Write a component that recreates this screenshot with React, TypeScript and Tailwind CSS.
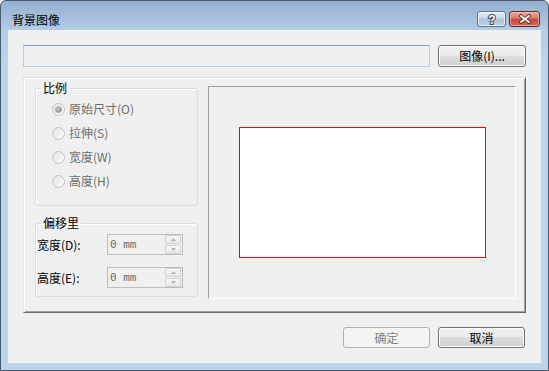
import React from "react";

const FONT = { fontFamily: '"Noto Sans CJK SC", "Noto Sans", sans-serif' };

function Radio({ checked, label }: { checked?: boolean; label: string }) {
  return (
    <div className="flex items-center h-[24px]">
      <svg width="13" height="13" viewBox="0 0 13 13" className="shrink-0">
        <defs>
          <linearGradient id={checked ? "rg1" : "rg0"} x1="0" y1="0" x2="1" y2="1">
            <stop offset="0" stopColor="#e2e2e2" />
            <stop offset="1" stopColor="#fbfbfb" />
          </linearGradient>
          <radialGradient id="dot" cx="0.4" cy="0.35" r="0.7">
            <stop offset="0" stopColor="#c8c8c8" />
            <stop offset="1" stopColor="#8e8e8e" />
          </radialGradient>
        </defs>
        <circle cx="6.5" cy="6.5" r="6" fill={`url(#${checked ? "rg1" : "rg0"})`} stroke="#c4c4c4" />
        {checked && <circle cx="6.5" cy="6.5" r="3.3" fill="url(#dot)" />}
      </svg>
      <span className="ml-[4px] text-[12px] leading-[14px] text-[#6d6d6d]">{label}</span>
    </div>
  );
}

function SpinBtn({ up }: { up?: boolean }) {
  return (
    <div className="w-[16px] h-[9px] border border-[#d2d2d2] rounded-[1px] bg-[linear-gradient(to_bottom,#f7f7f7,#e8e8e8)] flex items-center justify-center">
      <svg width="5" height="3" viewBox="0 0 5 3">
        {up ? <polygon points="2.5,0 5,3 0,3" fill="#b4b4b4" /> : <polygon points="0,0 5,0 2.5,3" fill="#b4b4b4" />}
      </svg>
    </div>
  );
}

function Spin() {
  return (
    <div className="w-[76px] h-[21px] border border-[#bdbdbd] bg-[#f0f0f0] flex items-center">
      <span className="flex-1 pl-[2px] text-[11px] leading-[14px] text-[#6d6d6d]" style={{ fontFamily: '"DejaVu Sans Mono", "Liberation Mono", monospace' }}>
        0 mm
      </span>
      <div className="flex flex-col gap-[1px] mr-[1px]">
        <SpinBtn up />
        <SpinBtn />
      </div>
    </div>
  );
}

function Legend({ children }: { children: React.ReactNode }) {
  return <legend className="ml-[5px] px-[2px] text-[12px] leading-[14px] text-black">{children}</legend>;
}

export default function App() {
  return (
    <div
      className="w-[549px] h-[371px] flex flex-col border border-[#4b5a6b] rounded-t-[6px] overflow-hidden bg-[linear-gradient(to_bottom,#93b0d0_0px,#b3cce7_29px,#bcd4ec_60px,#bcd4ec_100%)]"
      style={FONT}
    >
      {/* Title bar */}
      <div className="h-[29px] flex items-start justify-between pt-[10px] pl-[11px] pr-[8px]">
        <span className="mt-[1px] text-[12px] leading-[16px] text-black">背景图像</span>
        <div className="flex gap-[3px]">
          <div className="w-[29px] h-[16px] rounded-[3px] border border-[#5f7187] shadow-[inset_0_0_0_1px_rgba(255,255,255,0.7)] bg-[linear-gradient(to_bottom,#e3ecf6_0%,#c7d7ea_45%,#a9c0dc_50%,#bdd2ea_100%)] flex items-center justify-center">
            <svg width="10" height="13" viewBox="0 0 10 13">
              <text
                x="5"
                y="11"
                textAnchor="middle"
                fontSize="12"
                fontWeight="bold"
                fontFamily="Liberation Sans, Arial, sans-serif"
                fill="#ffffff"
                stroke="#3b4b60"
                strokeWidth="2"
                paintOrder="stroke"
              >
                ?
              </text>
            </svg>
          </div>
          <div className="w-[31px] h-[16px] rounded-[3px] border border-[#6b2b25] shadow-[inset_0_0_0_1px_rgba(255,210,200,0.55)] bg-[linear-gradient(to_bottom,#eaa89c_0%,#d9796c_45%,#c4463a_50%,#d36a58_100%)] flex items-center justify-center">
            <svg width="14" height="10" viewBox="0 0 14 10">
              <path d="M3 2 L11 8 M11 2 L3 8" stroke="#3d2a28" strokeWidth="3.4" strokeLinecap="square" />
              <path d="M3 2 L11 8 M11 2 L3 8" stroke="#ffffff" strokeWidth="1.8" strokeLinecap="square" />
            </svg>
          </div>
        </div>
      </div>

      {/* Body with frame */}
      <div className="flex-1 flex px-[7px] pb-[7px]">
        <div className="flex-1 bg-[#f0f0f0] flex flex-col px-[15px] pt-[15px]">
          {/* Row 1 */}
          <div className="flex gap-[8px]">
            <div className="w-[407px] h-[22px] border border-[#b5cfe7] border-t-[#7ea2cc] bg-[#f0f0f0]" />
            <button className="w-[88px] h-[22px] rounded-[3px] border border-[#707070] shadow-[inset_0_0_0_1px_#fcfcfc] bg-[linear-gradient(to_bottom,#f2f2f2_0%,#ebebeb_50%,#dddddd_50%,#cfcfcf_100%)] text-[12px] leading-[14px] text-black flex items-center justify-center">
              图像(I)...
            </button>
          </div>

          {/* Main frame */}
          <div className="mt-[10px] h-[236px] flex items-start border border-t-[#e3e3e3] border-l-[#e3e3e3] border-r-[#696969] border-b-[#696969] shadow-[inset_1px_1px_0_#ffffff,inset_-1px_-1px_0_#a0a0a0] pl-[11px] pr-[9px]">
            <div className="w-[163px] mt-[3px] flex flex-col">
              <fieldset className="h-[125px] border border-[#d5dfe5] rounded-[3px] shadow-[inset_1px_1px_0_#fff]">
                <Legend>比例</Legend>
                <div className="pl-[16px] pt-[2px]">
                  <Radio checked label="原始尺寸(O)" />
                  <Radio label="拉伸(S)" />
                  <Radio label="宽度(W)" />
                  <Radio label="高度(H)" />
                </div>
              </fieldset>
              <fieldset className="mt-[10px] h-[81px] border border-[#d5dfe5] rounded-[3px] shadow-[inset_1px_1px_0_#fff]">
                <Legend>偏移里</Legend>
                <div className="pl-[1px] pt-[4px] flex flex-col gap-[12px]">
                  <div className="flex items-center">
                    <span className="w-[70px] text-[12px] leading-[14px] text-black">宽度(D):</span>
                    <Spin />
                  </div>
                  <div className="flex items-center">
                    <span className="w-[70px] text-[12px] leading-[14px] text-black">高度(E):</span>
                    <Spin />
                  </div>
                </div>
              </fieldset>
            </div>

            <div className="ml-[10px] mt-[8px] w-[308px] h-[213px] border border-t-[#a0a0a0] border-l-[#a0a0a0] border-r-white border-b-white flex items-center justify-center">
              <div className="w-[247px] h-[131px] bg-[#ff0000] p-[1px] flex">
                <div className="flex-1 bg-white" />
              </div>
            </div>
          </div>

          {/* Bottom buttons */}
          <div className="mt-[14px] flex justify-end gap-[8px] pr-[1px]">
            <button className="w-[87px] h-[21px] rounded-[3px] border border-[#adb2b5] bg-[#f4f4f4] text-[12px] leading-[14px] text-[#838383] flex items-center justify-center">
              确定
            </button>
            <button className="w-[87px] h-[21px] rounded-[3px] border border-[#707070] shadow-[inset_0_0_0_1px_#fcfcfc] bg-[linear-gradient(to_bottom,#f2f2f2_0%,#ebebeb_50%,#dddddd_50%,#cfcfcf_100%)] text-[12px] leading-[14px] text-black flex items-center justify-center">
              取消
            </button>
          </div>
        </div>
      </div>
    </div>
  );
}
